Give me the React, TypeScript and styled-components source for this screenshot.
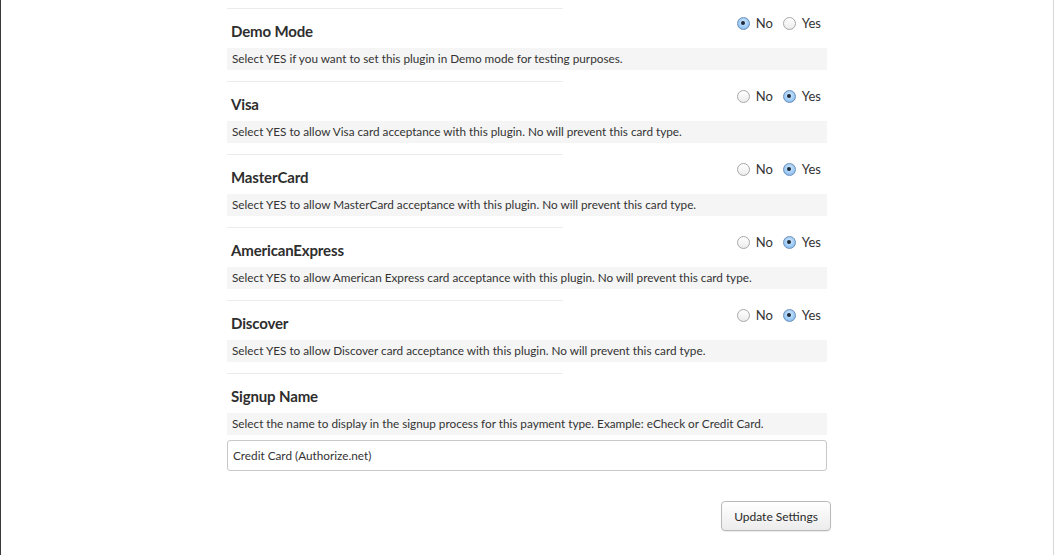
import React from "react";
import styled, { createGlobalStyle } from "styled-components";

const Global = createGlobalStyle`
  html, body { margin: 0; padding: 0; background: #fff; }
  body { font-family: Lato, "Open Sans", sans-serif; color: #333; }
`;

const Frame = styled.div`
  width: 1052px;
  min-height: 555px;
  border-left: 1px solid #3a3a3a;
  border-right: 1px solid #d6d6d6;
  box-sizing: content-box;
`;

const Content = styled.div`
  width: 600px;
  margin: 0 auto;
  padding-top: 8px;
`;

const Row = styled.section`
  display: flex;
  flex-direction: column;
  padding-bottom: 11px;
`;

const Separator = styled.div`
  width: 336px;
  height: 1px;
  background: #ececec;
`;

const Header = styled.div`
  display: flex;
  justify-content: space-between;
  align-items: flex-start;
  height: 39px;
`;

const Title = styled.h3`
  margin: 13px 0 0 4px;
  font-size: 15px;
  font-weight: 700;
  letter-spacing: -0.15px;
  line-height: 18px;
  color: #2e2e2e;
`;

const RadioGroup = styled.div`
  display: flex;
  gap: 10px;
  margin: 6px 6px 0 0;
`;

const RadioLabel = styled.label`
  display: flex;
  align-items: center;
  gap: 6px;
  font-size: 13px;
  color: #333;
  line-height: 16px;
`;

const Radio = styled.span<{ $checked?: boolean }>`
  position: relative;
  width: 13px;
  height: 13px;
  border-radius: 50%;
  box-sizing: border-box;
  border: 1px solid ${(p) => (p.$checked ? "#6d8fb8" : "#a8a8a8")};
  background: ${(p) =>
    p.$checked
      ? "radial-gradient(circle at 50% 40%, #d8ecff 0%, #8fc2f2 70%, #6aa8e6 100%)"
      : "linear-gradient(#ffffff, #ececec)"};
  &::after {
    content: "";
    display: ${(p) => (p.$checked ? "block" : "none")};
    position: absolute;
    left: 50%;
    top: 50%;
    width: 4px;
    height: 4px;
    margin: -2px 0 0 -2px;
    border-radius: 50%;
    background: #1d2a3a;
  }
`;

const Description = styled.div`
  height: 22px;
  background: #f5f5f5;
  font-size: 11.75px;
  line-height: 22px;
  padding-left: 5px;
  color: #333;
`;

const TextInput = styled.input`
  margin-top: 5px;
  width: 600px;
  height: 31px;
  box-sizing: border-box;
  border: 1px solid #c8c8c8;
  border-radius: 3px;
  padding: 0 5px;
  font-family: Lato, "Open Sans", sans-serif;
  font-size: 11.75px;
  color: #333;
  background: #fff;
  outline: none;
`;

const ButtonRow = styled.div`
  display: flex;
  justify-content: flex-end;
  margin-right: -4px;
  padding-top: 19px;
`;

const Button = styled.button`
  width: 110px;
  height: 30px;
  border: 1px solid #b9b9b9;
  border-radius: 4px;
  background: linear-gradient(#ffffff, #ececec);
  box-shadow: 0 1px 1px rgba(0, 0, 0, 0.08);
  font-family: Lato, "Open Sans", sans-serif;
  font-size: 12px;
  color: #2a2a2a;
`;

type Setting = { title: string; desc: string; yes: boolean };

const settings: Setting[] = [
  { title: "Demo Mode", desc: "Select YES if you want to set this plugin in Demo mode for testing purposes.", yes: false },
  { title: "Visa", desc: "Select YES to allow Visa card acceptance with this plugin. No will prevent this card type.", yes: true },
  { title: "MasterCard", desc: "Select YES to allow MasterCard acceptance with this plugin. No will prevent this card type.", yes: true },
  { title: "AmericanExpress", desc: "Select YES to allow American Express card acceptance with this plugin. No will prevent this card type.", yes: true },
  { title: "Discover", desc: "Select YES to allow Discover card acceptance with this plugin. No will prevent this card type.", yes: true },
];

export default function App() {
  return (
    <>
      <Global />
      <Frame>
        <Content>
          {settings.map((s) => (
            <Row key={s.title}>
              <Separator />
              <Header>
                <Title>{s.title}</Title>
                <RadioGroup>
                  <RadioLabel>
                    <Radio $checked={!s.yes} />
                    No
                  </RadioLabel>
                  <RadioLabel>
                    <Radio $checked={s.yes} />
                    Yes
                  </RadioLabel>
                </RadioGroup>
              </Header>
              <Description>{s.desc}</Description>
            </Row>
          ))}
          <Row>
            <Separator />
            <Header>
              <Title>Signup Name</Title>
            </Header>
            <Description>
              Select the name to display in the signup process for this payment type. Example: eCheck or Credit Card.
            </Description>
            <TextInput defaultValue="Credit Card (Authorize.net)" />
          </Row>
          <ButtonRow>
            <Button>Update Settings</Button>
          </ButtonRow>
        </Content>
      </Frame>
    </>
  );
}
